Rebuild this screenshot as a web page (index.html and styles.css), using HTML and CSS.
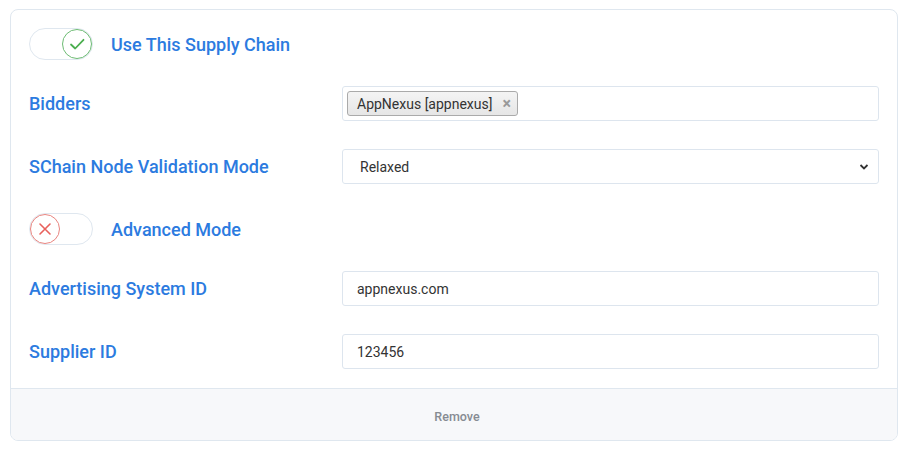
FILE: index.html
```html
<!DOCTYPE html>
<html>
<head>
<meta charset="utf-8">
<link rel="stylesheet" href="styles.css">
</head>
<body>
<div class="card">
  <div class="card-body">
    <div class="row toggle-row">
      <div class="toggle on">
        <span class="knob">
          <svg width="30" height="30" viewBox="0 0 30 30"><circle cx="15" cy="15" r="14.5" fill="#fff" stroke="#6dbb73" stroke-width="1"/><path d="M9 15.5 L13.2 19.5 L21.5 10.8" fill="none" stroke="#4caf50" stroke-width="1.8" stroke-linecap="round" stroke-linejoin="round"/></svg>
        </span>
      </div>
      <span class="label">Use This Supply Chain</span>
    </div>
    <div class="row gap-26">
      <span class="label col-label">Bidders</span>
      <div class="field tags">
        <span class="tag">AppNexus [appnexus]<span class="tag-x">×</span></span>
      </div>
    </div>
    <div class="row gap-28">
      <span class="label col-label">SChain Node Validation Mode</span>
      <div class="field select">
        <span>Relaxed</span>
        <svg class="chev" width="10" height="8" viewBox="0 0 10 8"><path d="M1.5 2 L5 5.5 L8.5 2" fill="none" stroke="#333" stroke-width="1.8"/></svg>
      </div>
    </div>
    <div class="row toggle-row gap-29">
      <div class="toggle off">
        <span class="knob">
          <svg width="30" height="30" viewBox="0 0 30 30"><circle cx="15" cy="15" r="14.5" fill="#fff" stroke="#e8847f" stroke-width="1"/><path d="M10 10 L20 20 M20 10 L10 20" fill="none" stroke="#e8615c" stroke-width="1.6" stroke-linecap="round"/></svg>
        </span>
      </div>
      <span class="label">Advanced Mode</span>
    </div>
    <div class="row gap-26">
      <span class="label col-label">Advertising System ID</span>
      <div class="field text">appnexus.com</div>
    </div>
    <div class="row gap-28">
      <span class="label col-label">Supplier ID</span>
      <div class="field text">123456</div>
    </div>
  </div>
  <div class="card-footer"><span class="remove">Remove</span></div>
</div>
</body>
</html>
```
FILE: styles.css
```css
html, body {
  margin: 0;
  padding: 0;
  background: #fff;
}
body {
  padding: 9px 11px 0 10px;
  font-family: Roboto, "Liberation Sans", sans-serif;
}
.card {
  width: 886px;
  border: 1px solid #dfe7ef;
  border-radius: 8px;
  overflow: hidden;
}
.card-body {
  display: flex;
  flex-direction: column;
  padding: 18px 18px 19px 18px;
}
.row {
  display: flex;
  align-items: center;
  height: 35px;
}
.gap-26 { margin-top: 26px; }
.gap-28 { margin-top: 28px; }
.gap-29 { margin-top: 29px; }
.toggle-row {
  height: 32px;
}
.label {
  color: #2c7be0;
  font-size: 18px;
  font-weight: 500;
}
.col-label {
  width: 313px;
  flex: none;
}
.toggle {
  width: 62px;
  height: 30px;
  border: 1px solid #dfe7ef;
  border-radius: 16px;
  display: flex;
  align-items: center;
  margin-right: 18px;
  background: #fff;
}
.toggle.on {
  justify-content: flex-end;
}
.toggle.off {
  justify-content: flex-start;
}
.knob {
  display: flex;
  width: 30px;
  height: 30px;
}
.field {
  flex: 1;
  height: 33px;
  border: 1px solid #dde5ee;
  border-radius: 3px;
  display: flex;
  align-items: center;
  font-size: 14px;
  color: #333;
  background: #fff;
}
.text {
  padding-left: 14px;
}
.select {
  padding-left: 17px;
  padding-right: 9px;
  justify-content: space-between;
}
.tags {
  padding-left: 4px;
}
.tag {
  display: inline-flex;
  align-items: center;
  height: 23px;
  padding: 0 6px 0 9px;
  border: 1px solid #aaa;
  border-radius: 3px;
  background: linear-gradient(#f4f4f4, #e6e6e6);
  font-size: 14px;
  color: #333;
}
.tag-x {
  margin-left: 10px;
  color: #999;
  font-weight: 700;
  font-size: 16px;
  line-height: 1;
}
.card-footer {
  background: #f7f8fa;
  border-top: 1px solid #dfe7ef;
  height: 52px;
  display: flex;
  align-items: center;
  justify-content: center;
  font-size: 12.5px;
  font-weight: 500;
  color: #868b92;
  padding-top: 3px;
  box-sizing: border-box;
}
.remove {
  padding-left: 6px;
}
```
